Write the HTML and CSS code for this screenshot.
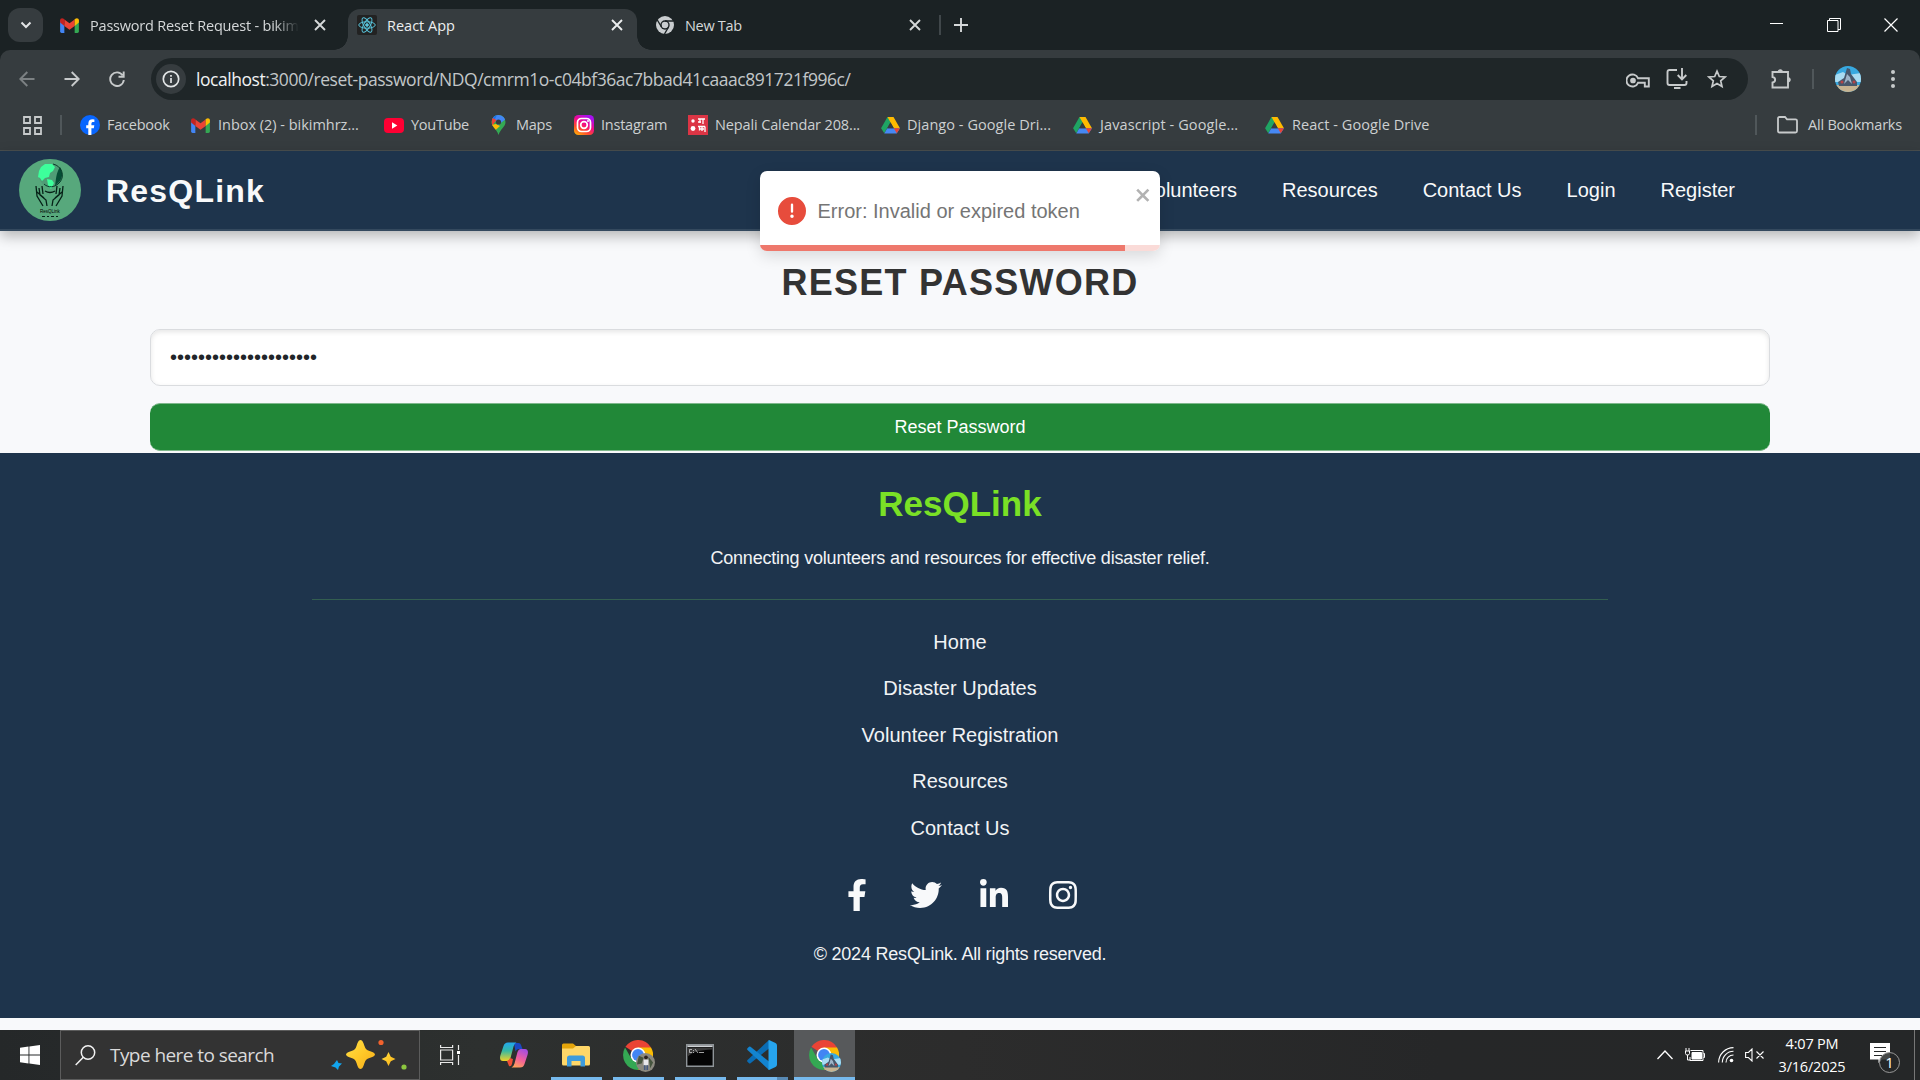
FILE: index.html
```html
<!DOCTYPE html>
<html lang="en">
<head>
<meta charset="utf-8">
<title>React App</title>
<link rel="stylesheet" href="styles.css">
</head>
<body>
<svg width="0" height="0" class="defs" aria-hidden="true">
  <defs>
    <symbol id="gmail" viewBox="0 0 20 16"><path fill="#4285f4" d="M0 2v12.5A1.5 1.5 0 0 0 1.500 16H4.500V6z"/><path fill="#34a853" d="M20 2v12.500a1.500 1.500 0 0 1-1.500 1.500h-3V6z"/><path fill="#ea4335" d="M4.500 8.500V1.500L10 5.600l5.500-4.100v7L10 12.500z"/><path fill="#c5221f" d="M0 2.300v2.500l4.500 3.700V1.500L3.800.9C2.200-.3 0 .5 0 2.300z"/><path fill="#fbbc04" d="M20 2.300v2.500l-4.500 3.700V1.500l.7-.6C17.800-.3 20 .5 20 2.300z"/></symbol>
    <symbol id="x" viewBox="0 0 12 12"><path d="M1 1l10 10M11 1L1 11" stroke="currentColor" stroke-width="1.900" fill="none"/></symbol>
    <symbol id="drive" viewBox="0 0 20 18"><path fill="#1fa463" d="M6.800 0h6.400L3.400 17.300 0 11.800z"/><path fill="#ffba00" d="M6.800 0h6.400L20 11.800h-6.500z"/><path fill="#4688f4" d="M6.600 11.800H20l-3.400 5.600H3.400z"/><path fill="#ea4335" d="M13.500 11.800H20l-3.400 5.500z"/><path fill="#363c3f" d="M10 5.800l3.500 6H6.600z"/></symbol>
    <symbol id="chrome" viewBox="0 0 32 32"><path fill="#ea4335" d="M16 16L2.600 7.300A16 16 0 0 1 29.900 8z"/><path fill="#fbbc04" d="M16 16V8h13.900A16 16 0 0 1 16 32l7-12z"/><path fill="#34a853" d="M16 32A16 16 0 0 1 2.200 8L9 20l7 4 7-4z"/><circle cx="16" cy="16" r="8" fill="#fff"/><circle cx="16" cy="16" r="6.300" fill="#4285f4"/></symbol>
    <symbol id="portrait" viewBox="0 0 26 26"><clipPath id="pc"><circle cx="13" cy="13" r="13"/></clipPath><g clip-path="url(#pc)"><path fill="#38a9e0" d="M0 0h26v26H0z"/><path fill="#a9dcf2" d="M0 9l8-3 5 3 13-2v9H0z"/><path fill="#c6b391" d="M0 19h26v7H0z"/><path fill="#47576b" d="M12 2l3 1 1 5 6 8v4H4l-1-4 6-4z"/><path fill="#9db4c8" d="M12 8l3 3 2 7-4-4-4 4z"/><circle cx="7" cy="16" r="1.500" fill="#b54446"/><circle cx="19" cy="16" r="1.500" fill="#b54446"/></g></symbol>
  </defs>
</svg>

<div class="browser">
  <div class="tabs">
    <div class="tab-search"><svg width="12" height="8" viewBox="0 0 12 8"><path d="M1.500 1.500L6 6l4.500-4.500" stroke="#e3e5e6" stroke-width="2" fill="none"/></svg></div>
    <div class="tab tab-mail">
      <svg class="fav" width="19" height="15"><use href="#gmail"/></svg>
      <span class="tab-title fade">Password Reset Request - bikim</span>
      <svg class="tab-x" width="12" height="12"><use href="#x"/></svg>
    </div>
    <div class="tab tab-active">
      <span class="fav react"><svg width="18" height="18" viewBox="-12 -12 24 24" fill="none" stroke="#58c4dc" stroke-width="1.300"><ellipse rx="11" ry="4.300"/><ellipse rx="11" ry="4.300" transform="rotate(60)"/><ellipse rx="11" ry="4.300" transform="rotate(120)"/><circle r="1.800" fill="#58c4dc"/></svg></span>
      <span class="tab-title">React App</span>
      <svg class="tab-x" width="12" height="12"><use href="#x"/></svg>
    </div>
    <div class="tab tab-new">
      <svg class="fav" width="18" height="18" viewBox="0 0 18 18"><circle cx="9" cy="9" r="9" fill="#c9cdcf"/><circle cx="9" cy="9" r="4.700" fill="#1b2224"/><circle cx="9" cy="9" r="3.300" fill="#c9cdcf"/><path d="M9 5h8.500M5.500 11L1.300 4M12.500 11L8.500 18" stroke="#1b2224" stroke-width="1.400"/></svg>
      <span class="tab-title">New Tab</span>
      <svg class="tab-x" width="12" height="12"><use href="#x"/></svg>
    </div>
    <span class="tab-sep"></span>
    <svg class="plus" width="14" height="14" viewBox="0 0 14 14"><path d="M7 0v14M0 7h14" stroke="#d5d8d9" stroke-width="1.900"/></svg>
    <div class="window-controls">
      <svg width="14" height="14" viewBox="0 0 14 14"><path d="M0 5.500h13" stroke="#fff"/></svg>
      <svg width="14" height="14" viewBox="0 0 14 14" fill="none" stroke="#fff"><path d="M.5 2.500h10.500v11H.5zM2.500 2.500V.5H13.500v11h-2.500"/></svg>
      <svg width="14" height="14" viewBox="0 0 14 14"><path d="M.5.5l13 13M13.500.5l-13 13" stroke="#fff" stroke-width="1.200"/></svg>
    </div>
  </div>

  <div class="toolbar">
    <svg class="nav-icon dim" width="16" height="16" viewBox="0 0 16 16"><path d="M15.500 8H1.500M8.300 1L1.300 8l7 7"/></svg>
    <svg class="nav-icon" width="16" height="16" viewBox="0 0 16 16"><path d="M.5 8h14M7.700 1l7 7-7 7"/></svg>
    <svg class="nav-icon" width="16" height="16" viewBox="0 0 16 16"><path d="M13.600 4.300A6.800 6.800 0 1 0 14.800 9M14.700.5v5.200H9.500"/></svg>
    <div class="omnibox">
      <span class="info"><svg width="18" height="18" viewBox="0 0 18 18"><circle cx="9" cy="9" r="7.700" fill="none" stroke="#e2e5e6" stroke-width="1.700"/><path d="M9 8v5M9 5v1.800" stroke="#e2e5e6" stroke-width="1.700"/></svg></span>
      <span class="url"><b>localhost</b>:3000/reset-password/NDQ/cmrm1o-c04bf36ac7bbad41caaac891721f996c/</span>
      <svg class="key" width="24" height="16" viewBox="0 0 24 16" fill="none" stroke="#c7cacb" stroke-width="1.900"><path d="M12 5.200h10.800v8.300h-4V9.800H12a6 6 0 1 1 0-4.600z"/><circle cx="7" cy="7.500" r="1.900" fill="#c7cacb"/></svg>
      <svg class="install" width="22" height="22" viewBox="0 0 22 22" fill="none" stroke="#c7cacb" stroke-width="1.900"><path d="M11 2H3.500Q1.500 2 1.500 4v11q0 2 2 2h15q2 0 2-2v-2M16 0v11M11.700 7l4.300 4.300L20.300 7M8 20h6.500"/></svg>
      <svg width="20" height="20" viewBox="0 0 20 20" fill="none" stroke="#c7cacb" stroke-width="1.700"><path d="M10 2.200l2.300 5.300 5.800.5-4.400 3.800 1.300 5.700-5-3-5 3 1.300-5.700L1.900 8l5.800-.5z"/></svg>
    </div>
    <svg class="ext" width="22" height="22" viewBox="0 0 22 22" fill="none" stroke="#c7cacb" stroke-width="1.900"><path d="M2.500 4h15.500v15.500H2.500v-5c3.500-.6 3.500-5 0-5.500z"/><path d="M8 4a2.300 2.300 0 0 1 4.600 0zM18 9.500a2.300 2.300 0 0 1 0 4.600z" fill="#c7cacb" stroke-width="1"/></svg>
    <span class="bar-sep"></span>
    <svg class="avatar" width="26" height="26"><use href="#portrait"/></svg>
    <svg class="menu" width="4" height="18" viewBox="0 0 4 18" fill="#c7cacb"><circle cx="2" cy="2" r="2"/><circle cx="2" cy="9" r="2"/><circle cx="2" cy="16" r="2"/></svg>
  </div>

  <div class="bookmarks">
    <svg class="apps" width="19" height="19" viewBox="0 0 19 19" fill="none" stroke="#c7cacb" stroke-width="1.800"><path d="M1 1h6v6H1zM12 1h6v6h-6zM1 12h6v6H1zM12 12h6v6h-6z"/></svg>
    <span class="bar-sep"></span>
    <div class="bm w-fb"><svg width="20" height="20" viewBox="0 0 20 20"><circle cx="10" cy="10" r="10" fill="#0866ff"/><path fill="#fff" d="M8.300 20v-6.700H6.200v-3h2.100V8.900c0-3.300 1.500-4.700 4.500-4.700l1.600.2v2.700h-1c-1.500 0-2 .6-2 1.900v1.300h2.900l-.5 3h-2.400V20z"/></svg><span>Facebook</span></div>
    <div class="bm w-in"><svg width="19" height="15"><use href="#gmail"/></svg><span>Inbox (2) - bikimhrz...</span></div>
    <div class="bm w-yt"><svg width="20" height="15" viewBox="0 0 20 15"><rect width="20" height="15" rx="4" fill="#ff0033"/><path d="M8 4.200l5.300 3.300L8 10.800z" fill="#fff"/></svg><span>YouTube</span></div>
    <div class="bm w-mp"><svg width="15" height="20" viewBox="0 0 15 20"><clipPath id="pin"><path d="M7.500 0A7 7 0 0 1 14.500 7c0 5-5 6.500-7 13-2-6.500-7-8-7-13a7 7 0 0 1 7-7z"/></clipPath><g clip-path="url(#pin)"><path fill="#34a853" d="M0 0h15v20H0z"/><path fill="#4285f4" d="M0 0h15v4L7 10z"/><path fill="#1a73e8" d="M0 0h6L3 6 0 4z"/><path fill="#ea4335" d="M0 2l5.500 3L1 11z"/><path fill="#fbbc04" d="M5 9l4 2-5.500 5L0 10z"/></g><circle cx="7.500" cy="7" r="2.600" fill="#363c3f"/></svg><span>Maps</span></div>
    <div class="bm w-ig"><svg width="20" height="20" viewBox="0 0 20 20"><defs><linearGradient id="ig" x1="0" y1="1" x2=".6" y2="0"><stop offset="0" stop-color="#ffc400"/><stop offset=".35" stop-color="#ff4b2b"/><stop offset=".65" stop-color="#f10a8c"/><stop offset="1" stop-color="#a80ff0"/></linearGradient></defs><rect width="20" height="20" rx="4.500" fill="url(#ig)"/><g fill="none" stroke="#fff" stroke-width="1.700"><rect x="3.500" y="3.500" width="13" height="13" rx="4"/><circle cx="10" cy="10" r="3.300"/></g><circle cx="14" cy="6" r="1" fill="#fff"/></svg><span>Instagram</span></div>
    <div class="bm w-np"><svg width="20" height="20" viewBox="0 0 20 20"><path fill="#dc3545" d="M0 0h20v20H0z"/><circle cx="5" cy="6" r="1.700" fill="#fff"/><circle cx="5" cy="13.500" r="2.400" fill="#fff"/><path d="M10 4h7M12 4v4M15 4v5M10 7h3M10 11.500h7M11.500 11.500v4M14 12v4M17 11.500V17M11 14h5" stroke="#fff" stroke-width="1.300"/></svg><span>Nepali Calendar 208...</span></div>
    <div class="bm w-dj"><svg width="19" height="17"><use href="#drive"/></svg><span>Django - Google Dri...</span></div>
    <div class="bm w-js"><svg width="19" height="17"><use href="#drive"/></svg><span>Javascript - Google...</span></div>
    <div class="bm w-re"><svg width="19" height="17"><use href="#drive"/></svg><span>React - Google Drive</span></div>
    <div class="bm-all"><span class="bar-sep"></span><svg width="21" height="18" viewBox="0 0 21 18" fill="none" stroke="#c7cacb" stroke-width="1.800"><path d="M1 2.500Q1 1 2.500 1H8l2 2.300h8.500q1.500 0 1.500 1.500v10.200q0 1.500-1.500 1.500h-16Q1 16.500 1 15z"/></svg><span>All Bookmarks</span></div>
  </div>
</div>

<div class="page">
  <header class="site-header">
    <svg class="logo" width="62" height="62" viewBox="0 0 62 62">
      <circle cx="31" cy="31" r="31" fill="#57a87c"/>
      <circle cx="31.500" cy="16.500" r="11.500" fill="#4f9c76"/>
      <path d="M41 8c3 5 3 11-1 15l-4 4c1-6 1-13 5-19z" fill="#054d35"/>
      <path d="M20 12l2-4 4-3h7l3 3-2 4-3 2-1 4-4 1-3 3-2-3-2-1zM28 20l5 1 2 3-3 6-3-4z" fill="#3dff9b"/>
      <path d="M34 5c9 2 12 12 7 18-5 6-12 6-16 2" fill="none" stroke="#083c2a" stroke-width="1"/>
      <path d="M17 27l1 10 6 10M20 29l1 7 6 5 1 6M23 27l1 8M18 33l7 6M44 27l-1 10-6 10M41 29l-1 7-6 5-1 6M38 27l-1 8M43 33l-7 6M26 32q5 3 10 0" fill="none" stroke="#062117" stroke-width="1.300"/>
      <text x="31" y="54" text-anchor="middle" font-size="4.500">ResQLink</text>
      <path d="M23 57.500h3m2 0h2m2 0h3m2 0h2" stroke="#062117" stroke-width="1"/>
    </svg>
    <span class="brand">ResQLink</span>
    <nav class="site-nav"><a>Volunteers</a><a>Resources</a><a>Contact Us</a><a>Login</a><a>Register</a></nav>
  </header>

  <main class="reset">
    <h1>RESET PASSWORD</h1>
    <input class="field" type="password" value="abcdefghijklmnopqrstu">
    <button class="submit" type="button">Reset Password</button>
  </main>

  <footer class="site-footer">
    <h2>ResQLink</h2>
    <p class="tagline">Connecting volunteers and resources for effective disaster relief.</p>
    <hr>
    <ul class="links"><li>Home</li><li>Disaster Updates</li><li>Volunteer Registration</li><li>Resources</li><li>Contact Us</li></ul>
    <div class="social">
      <svg width="32" height="32" viewBox="0 0 320 512"><path d="M279.140 288l14.220-92.660h-88.910v-60.130c0-25.350 12.420-50.060 52.240-50.060h40.420V6.260S260.430 0 225.360 0c-73.220 0-121.080 44.380-121.080 124.720v70.620H22.890V288h81.390v224h100.170V288z"/></svg>
      <svg width="32" height="32" viewBox="0 0 512 512"><path d="M459.370 151.716c.325 4.548.325 9.097.325 13.645 0 138.720-105.583 298.558-298.558 298.558-59.452 0-114.680-17.219-161.137-47.106 8.447.974 16.568 1.299 25.340 1.299 49.055 0 94.213-16.568 130.274-44.832-46.132-.975-84.792-31.188-98.112-72.772 6.498.974 12.995 1.624 19.818 1.624 9.421 0 18.843-1.300 27.614-3.573-48.081-9.747-84.143-51.980-84.143-102.985v-1.299c13.969 7.797 30.214 12.670 47.431 13.319-28.264-18.843-46.781-51.005-46.781-87.391 0-19.492 5.197-37.360 14.294-52.954 51.655 63.675 129.300 105.258 216.365 109.807-1.624-7.797-2.599-15.918-2.599-24.040 0-57.828 46.782-104.934 104.934-104.934 30.213 0 57.502 12.670 76.670 33.137 23.715-4.548 46.456-13.320 66.599-25.340-7.798 24.366-24.366 44.833-46.132 57.827 21.117-2.273 41.584-8.122 60.426-16.243-14.292 20.791-32.161 39.308-52.628 54.253z"/></svg>
      <svg width="32" height="32" viewBox="0 0 448 512"><path d="M100.280 448H7.400V148.900h92.880zM53.790 108.100C24.090 108.100 0 83.500 0 53.800a53.790 53.790 0 0 1 107.580 0c0 29.700-24.100 54.300-53.790 54.300zM447.900 448h-92.680V302.400c0-34.700-.7-79.200-48.290-79.200-48.290 0-55.690 37.700-55.690 76.700V448h-92.780V148.900h89.080v40.800h1.300c12.400-23.500 42.690-48.300 87.880-48.300 94 0 111.280 61.900 111.280 142.300V448z"/></svg>
      <svg width="32" height="32" viewBox="0 0 448 512"><path d="M224.100 141c-63.600 0-114.900 51.300-114.900 114.900s51.300 114.900 114.900 114.900S339 319.500 339 255.900 287.700 141 224.100 141zm0 189.600c-41.100 0-74.700-33.500-74.700-74.700s33.500-74.700 74.700-74.700 74.700 33.500 74.700 74.700-33.600 74.700-74.700 74.700zm146.400-194.300c0 14.900-12 26.800-26.800 26.800-14.900 0-26.800-12-26.800-26.800s12-26.800 26.800-26.800 26.800 12 26.800 26.800zm76.100 27.200c-1.700-35.900-9.900-67.700-36.200-93.900-26.200-26.200-58-34.400-93.900-36.200-37-2.100-147.900-2.100-184.900 0-35.800 1.700-67.600 9.900-93.900 36.100s-34.400 58-36.200 93.900c-2.100 37-2.100 147.900 0 184.900 1.700 35.900 9.900 67.700 36.200 93.900s58 34.400 93.900 36.200c37 2.100 147.900 2.100 184.900 0 35.900-1.700 67.700-9.900 93.900-36.200 26.200-26.200 34.400-58 36.200-93.900 2.100-37 2.100-147.800 0-184.800zM398.800 388c-7.800 19.600-22.900 34.700-42.600 42.600-29.500 11.700-99.500 9-132.100 9s-102.700 2.600-132.100-9c-19.600-7.800-34.700-22.900-42.600-42.600-11.700-29.500-9-99.500-9-132.100s-2.600-102.700 9-132.100c7.800-19.600 22.900-34.700 42.600-42.600 29.500-11.700 99.500-9 132.100-9s102.700-2.600 132.100 9c19.600 7.800 34.700 22.900 42.600 42.600 11.700 29.500 9 99.500 9 132.100s2.700 102.700-9 132.100z"/></svg>
    </div>
    <p class="copy">© 2024 ResQLink. All rights reserved.</p>
  </footer>

  <div class="toast">
    <svg class="toast-icon" width="28" height="28" viewBox="0 0 24 24"><path fill="#e74c3c" d="M11.983 0a12.206 12.206 0 0 0-8.510 3.653A11.800 11.800 0 0 0 0 12.207 11.779 11.779 0 0 0 11.800 24h.214A12.111 12.111 0 0 0 24 11.791 11.766 11.766 0 0 0 11.983 0zM10.500 16.542a1.476 1.476 0 0 1 1.449-1.530h.027a1.527 1.527 0 0 1 1.523 1.470 1.475 1.475 0 0 1-1.449 1.530h-.027a1.529 1.529 0 0 1-1.523-1.470zM11 12.500v-6a1 1 0 0 1 2 0v6a1 1 0 1 1-2 0z"/></svg>
    <span>Error: Invalid or expired token</span>
    <svg class="toast-x" width="17.500" height="20" viewBox="0 0 14 16"><path fill="#b2b2b2" fill-rule="evenodd" d="M7.710 8.230l3.750 3.750-1.480 1.480-3.750-3.750-3.750 3.750L1 11.980l3.750-3.750L1 4.480 2.480 3l3.750 3.750L9.980 3l1.480 1.480-3.750 3.750z"/></svg>
    <div class="progress"><i></i></div>
  </div>
</div>

<div class="taskbar">
  <div class="start"><svg width="20" height="20" viewBox="0 0 20 20" fill="#fff"><path d="M0 2.800l8.500-1.200v8H0zM9.400 1.400L20 0v9.600H9.400zM0 10.500h8.500v8L0 17.300zM9.400 10.500H20V20L9.400 18.600z"/></svg></div>
  <div class="search">
    <svg width="21" height="21" viewBox="0 0 21 21" fill="none" stroke="#f2f2f2" stroke-width="1.500"><circle cx="13" cy="7.500" r="6.700"/><path d="M8.300 12.300L.7 20"/></svg>
    <span>Type here to search</span>
    <svg class="sparkle" width="76" height="32" viewBox="0 0 76 32"><defs><linearGradient id="gold" x1="0" y1="0" x2="1" y2="1"><stop offset="0" stop-color="#ffe04a"/><stop offset=".5" stop-color="#ffc928"/><stop offset="1" stop-color="#f5ab1c"/></linearGradient></defs><path fill="url(#gold)" d="M29.500 1c2 0 3 3 4 6s2 4 5 5 5.500 2 5.500 3.500-2.500 2.500-5.500 3.500-4 2-5 5-2 6-4 6-3-3-4-6-2-4-5-5-5.500-2-5.500-3.500 2.500-2.500 5.500-3.500 4-2 5-5 2-6 4-6z"/><path fill="url(#gold)" d="M57.500 13l2.300 4.700 4.700 2.300-4.700 2.300-2.300 4.700-2.300-4.700-4.700-2.300 4.700-2.300z"/><path fill="#12a5ee" d="M6 21l1.500 3 3.500.5-3 3-1 3.500-2.500-2.500L0 27l3-2z"/><circle cx="50" cy="3.500" r="2.600" fill="#f2622d"/><circle cx="73" cy="28" r="2.600" fill="#8cc63f"/></svg>
  </div>
  <div class="task view"><svg width="20" height="20" viewBox="0 0 20 20" fill="none" stroke="#e8e8e8" stroke-width="1.200"><path d="M.6 5h12v10H.6zM.6 0v2.500h12V0M.6 20v-2.500h12V20M18.500 0v5M18.500 10v10"/><path fill="#fff" stroke="none" d="M17 6h3v3h-3z"/></svg></div>
  <div class="task"><svg width="28" height="26" viewBox="0 0 28 26"><defs><linearGradient id="c1" x1="0" y1="0" x2="0" y2="1"><stop offset="0" stop-color="#22a7ee"/><stop offset=".45" stop-color="#35b8a4"/><stop offset="1" stop-color="#f2d225"/></linearGradient><linearGradient id="c2" x1=".7" y1="0" x2=".3" y2="1"><stop offset="0" stop-color="#a44de0"/><stop offset=".55" stop-color="#f2609a"/><stop offset="1" stop-color="#ffa25a"/></linearGradient></defs><path d="M14 1h4.500q2 0 2.500 2l1.500 4h-4q-2 0-3 2.500z" fill="#1b48c4"/><path d="M8 .5h8.500q-2 .5-3 4L10.500 16q-1 3-3 3H3c-3 0-3.500-3-2.500-6L3.500 4Q4.500.5 8 .5z" fill="url(#c1)"/><path d="M20 25.500h-8.500q2-.5 3-4L17.500 10q1-3 3-3H25c3 0 3.500 3 2.500 6L24.500 22q-1 3.500-4.500 3.500z" fill="url(#c2)"/><path d="M7 19q2 0 3-3l3 1-1 5q-1 3-3 2z" fill="#ef4f36"/></svg></div>
  <div class="task open"><svg width="28" height="24" viewBox="0 0 28 24"><path fill="#e5a50a" d="M0 2q0-1.500 1.500-1.500H11L14 3v8H0z"/><path fill="#ffd768" d="M0 5.500h11L14 3h12.500Q28 3 28 4.500V21q0 1.500-1.500 1.500h-25Q0 22.500 0 21z"/><path fill="#3e9bdc" d="M5 23.500V15q0-2.500 2.500-2.500h13Q23 12.500 23 15v8.500h-4.500V18h-9v5.500z"/></svg></div>
  <div class="task open"><span class="chrome"><svg width="30" height="30"><use href="#chrome"/></svg><svg class="who" width="19" height="19" viewBox="0 0 20 20"><circle cx="10" cy="10" r="10" fill="#8b897f"/><path d="M3 3l5 2-2 6-5 1zM13 4l5 6-3 6z" fill="#46553f"/><path d="M8 7h5v6H8z" fill="#e8e8ec"/><circle cx="10.500" cy="4.500" r="2" fill="#2b221f"/><path d="M8.300 13h1.700v5H8.300zM11 13h1.700v5H11z" fill="#455a80"/></svg></span></div>
  <div class="task open"><svg width="28" height="23" viewBox="0 0 28 23"><path d="M.7.700h26.600v21.600H.7z" fill="#050505" stroke="#8f9599" stroke-width="1.400"/><path d="M1.400 1.400h25.200V3H1.400z" fill="#cfd3d6"/><path d="M1.400 3.500H26v2C14 6 6 8 1.400 13z" fill="#3a3a3a"/><path d="M3.500 5.500h2.500M3.500 5.500v3h2.500M7.500 6v1M7.500 8v1M9 5l3 4M13 8.500h5" stroke="#ccc" stroke-width=".8" fill="none"/></svg></div>
  <div class="task open stacked"><svg width="30" height="30" viewBox="0 0 30 30"><path fill="#0a6cb4" d="M22 0v8.500L3.500 23.300q-.8.500-1.500 0L.5 21.800q-.8-.9 0-1.700z"/><path fill="#1384d0" d="M22 30v-8.500L3.500 6.700q-.8-.5-1.500 0L.5 8.200q-.8.900 0 1.700z"/><path fill="#26a4ee" d="M22 0l6.500 3Q30 3.800 30 5.500v19q0 1.700-1.500 2.500L22 30q-.8-.5-.5-1V1q0-.7.500-1z"/></svg></div>
  <div class="task current"><span class="chrome"><svg width="30" height="30"><use href="#chrome"/></svg><svg class="who" width="19" height="19"><use href="#portrait"/></svg></span></div>
  <div class="tray">
    <svg width="16" height="10" viewBox="0 0 16 10"><path d="M.5 9L8 1l7.500 8" fill="none" stroke="#fff" stroke-width="1.300"/></svg>
    <svg class="batt" width="20" height="14" viewBox="0 0 20 14" fill="none" stroke="#fff"><path d="M5.500 2.500h12.500v10h-13V9M18.500 5.500h1v4h-1M1 0v3M4 0v3M.5 3h4v2.500l-1 1.500h-2l-1-1.500zM2.500 7v5h3"/><path d="M7 4.500h9.500v6.500H7z" fill="#fff"/></svg>
    <svg class="wifi" width="16" height="16" viewBox="0 0 16 16" fill="none" stroke="#fff"><path d="M.6 15.500A15 15 0 0 1 15.500.6M4.300 15.500A11.200 11.200 0 0 1 15.500 4.300M8 15.500A7.500 7.500 0 0 1 15.500 8" stroke-width="1.100"/><circle cx="13.500" cy="13.500" r="1.800" fill="#fff" stroke="none"/></svg>
    <svg class="vol" width="20" height="14" viewBox="0 0 20 14" fill="none" stroke="#fff" stroke-width="1.100"><path d="M.6 4.500h2.800L7 1v12L3.400 9.500H.6zM11.500 3.500l7 7M18.500 3.500l-7 7"/></svg>
    <div class="clock"><span>4:07 PM</span><span>3/16/2025</span></div>
    <div class="notify"><svg width="20" height="20" viewBox="0 0 20 20"><path fill="#fff" d="M0 0h20v16.500h-8L8.500 20v-3.500H0z"/><path d="M4 4.500h12M4 8.500h12M4 12.500h8" stroke="#252728" stroke-width="1.200"/></svg><b>1</b></div>
    <span class="show-desktop"></span>
  </div>
</div>
</body>
</html>
```
FILE: styles.css
```css
* { box-sizing: border-box; }
body { margin: 0; width: 1920px; height: 1080px; overflow: hidden; background: #f8f9fb; font-family: "Liberation Sans", Arial, sans-serif; display: flex; flex-direction: column; }
.defs { position: absolute; }
svg { display: block; flex: none; }
h1, h2, p, ul, hr { margin: 0; padding: 0; }

/* browser chrome */
.browser { height: 151px; background: #1b2224; font-family: "Open Sans", "Noto Sans", sans-serif; border-bottom: 1px solid #4a4f4f; flex: none; }
.tabs { height: 50px; display: flex; align-items: center; }
.tab-search { width: 35px; height: 34px; margin-left: 8px; border-radius: 12px; background: #363c3f; display: flex; align-items: center; justify-content: center; }
.tab { display: flex; align-items: center; height: 41px; color: #d5d8d9; margin-top: 9px; padding-bottom: 9px; }
.tab-title { font-size: 14.500px; letter-spacing: -0.300px; white-space: nowrap; flex: 1; overflow: hidden; }
.fade { -webkit-mask-image: linear-gradient(90deg, #000 88%, transparent); mask-image: linear-gradient(90deg, #000 88%, transparent); }
.tab-mail { width: 305px; padding-left: 17px; padding-right: 22px; }
.tab-mail .tab-title { margin-left: 11px; flex: 0 0 209px; letter-spacing: -0.200px; }
.tab-mail .tab-x { margin-left: auto; }
.tab-active { width: 289px; background: #363c3f; border-radius: 12px 12px 0 0; padding-left: 9px; padding-right: 14px; color: #eceeef; position: relative; }
.tab-active .tab-title { letter-spacing: 0; }
.tab-active::before, .tab-active::after { content: ""; position: absolute; bottom: 0; width: 14px; height: 14px; }
.tab-active::before { left: -14px; background: radial-gradient(circle at 0 0, transparent 13.500px, #363c3f 14px); }
.tab-active::after { right: -14px; background: radial-gradient(circle at 100% 0, transparent 13.500px, #363c3f 14px); }
.react { width: 20px; height: 20px; background: #222; border-radius: 2px; display: flex; align-items: center; justify-content: center; }
.react + .tab-title { margin-left: 10px; }
.tab-new { width: 284px; padding-left: 19px; }
.tab-new .tab-title { margin-left: 11px; }
.tab-sep { width: 2px; height: 20px; background: #40474a; margin-left: 18px; }
.plus { margin-left: 13px; }
.window-controls { margin-left: auto; display: flex; gap: 43px; padding-right: 22px; }
.toolbar { height: 57px; background: #363c3f; border-radius: 10px 10px 0 0; display: flex; align-items: center; padding: 1px 0 0 19px; }
.nav-icon { margin-right: 29px; fill: none; stroke: #c7cacb; stroke-width: 1.900; }
.nav-icon.dim { stroke: #7c8183; }
.omnibox { margin-left: -3px; width: 1597px; height: 42px; border-radius: 21px; background: #1f2628; display: flex; align-items: center; padding: 0 21px 0 5px; }
.info { width: 30px; height: 30px; border-radius: 50%; background: #363c3f; display: flex; align-items: center; justify-content: center; }
.url { margin-left: 10px; font-size: 17.500px; letter-spacing: -0.460px; color: #c2c6c8; flex: 1; white-space: nowrap; }
.url b { font-weight: 400; color: #f1f2f3; }
.key { margin-right: 16px; margin-top: 4px; }
.install { margin-right: 19px; }
.ext { margin-left: 22px; }
.bar-sep { width: 2px; height: 20px; background: #50575a; }
.toolbar .bar-sep { margin-left: 20px; }
.avatar { margin-left: 21px; }
.menu { margin-left: 30px; }
.bookmarks { height: 43px; background: #363c3f; display: flex; align-items: center; padding: 0 18px 7px 23px; font-size: 14.500px; letter-spacing: -0.240px; color: #cdd0d1; }
.bookmarks span { position: relative; top: -1px; }
.bookmarks .bar-sep { margin: 0 18px 0 18px; top: 0; }
.bm { display: flex; align-items: center; gap: 7px; white-space: nowrap; flex: none; }
.w-fb { width: 111px; }
.w-in { width: 193px; letter-spacing: -0.020px; gap: 8px; }
.w-yt { width: 107px; }
.w-mp { width: 83px; gap: 10px; }
.w-ig { width: 114px; }
.w-np { width: 193px; letter-spacing: -0.130px; }
.w-dj { width: 192px; letter-spacing: 0.050px; }
.w-js { width: 192px; letter-spacing: 0.100px; gap: 8px; }
.w-re { letter-spacing: 0.050px; gap: 8px; }
.bm-all { margin-left: auto; display: flex; align-items: center; gap: 10px; letter-spacing: -0.200px; }
.bm-all .bar-sep { margin: 0 10px 0 0; }

/* site */
.page { height: 879px; flex: none; position: relative; }
.site-header { height: 80px; background: #1e344c; border-bottom: 2px solid #34495e; box-shadow: 0 5px 13px rgba(0,0,0,.28); display: flex; align-items: center; padding: 0 185px 0 19px; position: relative; }
.brand { margin-left: 25px; font-size: 32px; font-weight: 700; letter-spacing: 1.200px; color: #f8f9fa; margin-top: 2px; }
.site-nav { margin-left: auto; display: flex; gap: 45px; font-size: 20px; color: #f8f9fa; margin-top: 1px; }
.reset { height: 222px; padding: 32px 150px 0; display: flex; flex-direction: column; }
.reset h1 { height: 40px; line-height: 40px; font-size: 36px; letter-spacing: 1.250px; text-align: center; color: #333; margin-bottom: 26px; }
.field { height: 57px; border: 1px solid #dadcdf; border-radius: 10px; background: #fff; padding: 0 19px; font: 20px "Liberation Sans", Arial, sans-serif; color: #212529; box-shadow: inset 0 2px 5px rgba(0,0,0,.1); outline: none; }
.submit { height: 48px; margin-top: 17px; border: 1px solid #7fb88c; border-width: 1px 0; border-radius: 10px; background: #218838; color: #fff; font: 18px "Liberation Sans", Arial, sans-serif; padding: 0; }
.site-footer { height: 565px; background: #1e344c; color: #f1f3f5; display: flex; flex-direction: column; align-items: center; padding-top: 31px; }
.site-footer h2 { font-size: 35px; line-height: 40px; color: #7ae026; }
.tagline, .copy { font-size: 18px; line-height: 24px; letter-spacing: -0.210px; }
.tagline { margin-top: 21.500px; }
.site-footer hr { width: 1296px; height: 1px; border: 0; background: #335e50; margin-top: 29.500px; }
.links { list-style: none; display: flex; flex-direction: column; gap: 22.400px; align-items: center; margin-top: 30px; font-size: 20px; line-height: 24px; }
.social { display: flex; gap: 36.700px; fill: #f8f9fa; margin-top: 39.400px; }
.copy { margin-top: 31px; }
.toast { position: absolute; left: 760px; top: 20px; width: 400px; height: 80px; border-radius: 7px; background: #fff; box-shadow: 0 5px 15px rgba(0,0,0,.13); display: flex; align-items: center; padding-left: 18px; font-size: 20px; color: #757575; overflow: hidden; }
.toast-icon { margin-right: 11.500px; }
.toast-x { position: absolute; right: 7.500px; top: 14px; }
.progress { position: absolute; left: 0; right: 0; bottom: 0; height: 6px; background: #fadbd8; }
.progress i { display: block; width: 365px; height: 6px; background: #ee786c; }

/* taskbar */
.taskbar { height: 50px; flex: none; display: flex; background: linear-gradient(90deg, #252829, #2d302f 25%, #2c2c2c 50%, #262728 75%, #252728); font-family: "Open Sans", "Noto Sans", sans-serif; color: #fff; }
.start { width: 60px; display: flex; align-items: center; justify-content: center; }
.search { width: 360px; background: #333; border: 1px solid #5c5c5c; display: flex; align-items: center; padding: 0 12px 0 14px; font-size: 19px; color: #dadada; }
.search span { margin-left: 14px; letter-spacing: -0.560px; }
.sparkle { margin-left: auto; }
.task { width: 62px; display: flex; align-items: center; justify-content: center; position: relative; }
.view { width: 63px; padding-right: 3px; }
.open::after, .current::after { content: ""; position: absolute; left: 6px; right: 5px; bottom: 0; height: 3px; background: #76b9ed; }
.stacked::after { background: linear-gradient(90deg, #76b9ed 40px, #5889b3 40px); }
.current { width: 61px; background: #57595b; margin-left: 1px; }
.current::after { left: 0; right: 0; }
.chrome { position: relative; width: 31px; height: 30px; }
.who { position: absolute; right: -1px; bottom: -2px; }
.tray { margin-left: auto; display: flex; align-items: center; height: 50px; }
.batt { margin-left: 12px; }
.wifi { margin-left: 13px; }
.vol { margin-left: 11px; }
.clock { width: 70px; margin-left: 12px; display: flex; flex-direction: column; align-items: center; font-size: 14.500px; line-height: 23px; letter-spacing: -0.200px; white-space: nowrap; }
.notify { position: relative; margin-left: 23px; width: 30px; height: 30px; margin-top: 5px; }
.notify b { position: absolute; right: 0; bottom: 0; width: 21px; height: 21px; border: 1px solid #999; border-radius: 50%; background: rgba(38,40,40,.85); font-size: 15px; font-weight: 400; line-height: 19px; text-align: center; }
.show-desktop { width: 1px; height: 50px; background: #777; margin-left: 14px; margin-right: 5px; }
```
